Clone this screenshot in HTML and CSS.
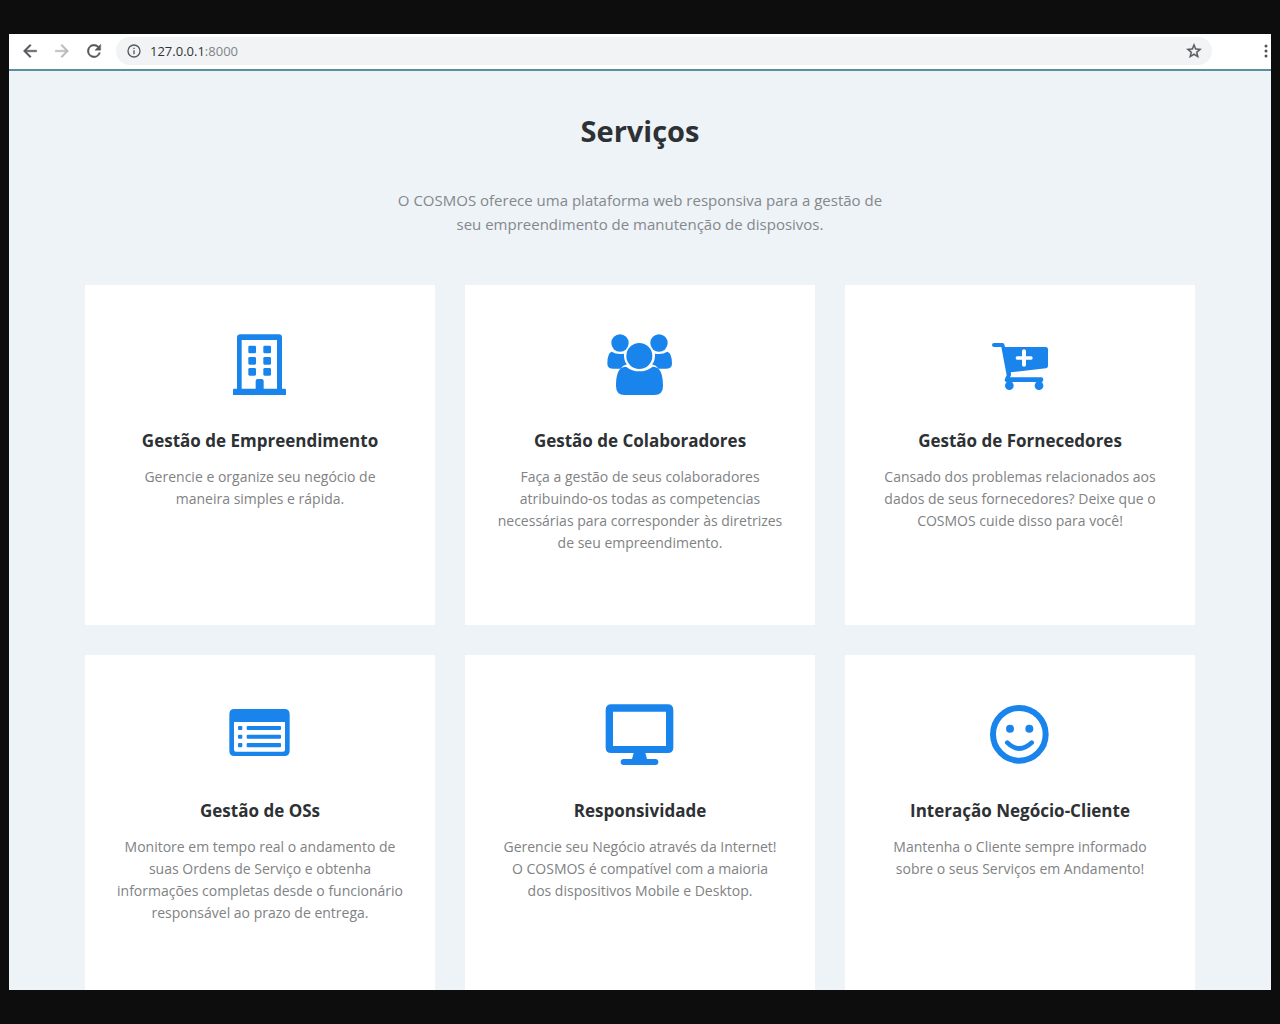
FILE: index.html
```html
<!DOCTYPE html>
<html lang="pt-BR">
<head>
<meta charset="utf-8">
<meta name="viewport" content="width=device-width, initial-scale=1">
<title>COSMOS</title>
<link rel="stylesheet" href="styles.css">
</head>
<body>
<div class="window">
  <header class="toolbar">
    <button class="tool" type="button" aria-label="Voltar"><svg viewBox="0 0 24 24"><path d="M20 11H7.800l5.600-5.600L12 4l-8 8 8 8 1.400-1.400L7.800 13H20z"/></svg></button>
    <button class="tool tool-off" type="button" aria-label="Avançar" disabled><svg viewBox="0 0 24 24"><path d="M12 4l-1.400 1.400 5.600 5.600H4v2h12.200l-5.600 5.600L12 20l8-8z"/></svg></button>
    <button class="tool" type="button" aria-label="Recarregar"><svg viewBox="0 0 24 24"><path d="M17.650 6.350A8 8 0 1 0 19.730 14h-2.080A6 6 0 1 1 12 6c1.660 0 3.140.690 4.220 1.780L13 11h7V4z"/></svg></button>
    <form class="address">
      <svg class="info" viewBox="0 0 24 24"><path d="M11 7h2v2h-2zm0 4h2v6h-2zm1-9a10 10 0 1 0 0 20 10 10 0 0 0 0-20zm0 18a8 8 0 1 1 0-16 8 8 0 0 1 0 16z"/></svg>
      <a class="url" href="#servicos">127.0.0.1<span class="port">:8000</span></a>
      <button class="star" type="button" aria-label="Adicionar aos favoritos"><svg viewBox="0 0 24 24"><path d="M22 9.240l-7.190-.620L12 2 9.190 8.630 2 9.240l5.460 4.730L5.820 21 12 17.270 18.180 21l-1.630-7.030zM12 15.400l-3.760 2.270 1-4.280-3.320-2.880 4.380-.380L12 6.100l1.710 4.040 4.380.380-3.320 2.880 1 4.280z"/></svg></button>
    </form>
    <button class="menu" type="button" aria-label="Menu"><svg viewBox="0 0 6 16"><circle cx="3" cy="3" r="1.500"/><circle cx="3" cy="8" r="1.500"/><circle cx="3" cy="13" r="1.500"/></svg></button>
  </header>

  <main class="services" id="servicos">
    <h1>Serviços</h1>
    <p class="intro">O COSMOS oferece uma plataforma web responsiva para a gestão de<br>seu empreendimento de manutenção de disposivos.</p>

    <div class="cards">
      <article class="card">
        <svg class="icon" viewBox="0 0 240 240"><path fill-rule="evenodd" d="M62 28H176q10 0 10 10V191h8q4 0 4 4v15H39v-15q0-4 4-4h8V38q0-10 11-10zM65 45V191H107V168q0-6 6-6h12q6 0 6 6v23H171V45z"/><rect x="85" y="62" width="23" height="23" rx="4"/><rect x="130" y="62" width="23" height="23" rx="4"/><rect x="85" y="96" width="23" height="23" rx="4"/><rect x="130" y="96" width="23" height="23" rx="4"/><rect x="85" y="129" width="23" height="23" rx="4"/><rect x="130" y="129" width="23" height="23" rx="4"/></svg>
        <h2>Gestão de Empreendimento</h2>
        <p>Gerencie e organize seu negócio de<br>maneira simples e rápida.</p>
      </article>
      <article class="card">
        <svg class="icon" viewBox="0 0 240 240"><circle cx="60" cy="54" r="26"/><circle cx="177" cy="54" r="26"/><circle cx="118" cy="93" r="39"/><path d="M35 80q14 9 37 6-1 22 9 32-12 3-20 13H40Q22 131 22 116 22 84 35 80zM202 80q-14 9-37 6 1 22-9 32 12 3 20 13h21q19 0 19-15 0-32-14-36zM78 125q18 14 40 14t40-14c24-1 31 25 31 58q0 27-26 27H74q-26 0-26-27c0-33 7-59 30-58z"/></svg>
        <h2>Gestão de Colaboradores</h2>
        <p>Faça a gestão de seus colaboradores<br>atribuindo-os todas as competencias<br>necessárias para corresponder às diretrizes<br>de seu empreendimento.</p>
      </article>
      <article class="card">
        <svg class="icon" viewBox="0 0 240 240"><path fill-rule="evenodd" d="M42 54H68q5 0 7 12H197q7 0 7 7v50q0 6-6 7L92 142q3 7-2 15h94q6 0 6 7t-6 7H80q-6 0-6-6 0-3 6-14L64 66H42q-6 0-6-6t6-6zM126 78V94H111q-4 0-4 5t4 5h15v16q0 5 6 5t6-5v-16h16q4 0 4-5t-4-5H138V78q0-5-6-5t-6 5z"/><circle cx="88" cy="182" r="13"/><circle cx="177" cy="182" r="13"/></svg>
        <h2>Gestão de Fornecedores</h2>
        <p>Cansado dos problemas relacionados aos<br>dados de seus fornecedores? Deixe que o<br>COSMOS cuide disso para você!</p>
      </article>
      <article class="card">
        <svg class="icon" viewBox="0 0 240 240"><path fill-rule="evenodd" d="M43 42H193q16 0 16 16V167q0 16-16 16H43q-15 0-15-16V58q0-16 15-16zM42 81V164q0 6 6 6H189q6 0 6-6V81z"/><rect x="54" y="93" width="13" height="12" rx="3"/><rect x="54" y="119" width="13" height="12" rx="3"/><rect x="54" y="144" width="13" height="13" rx="3"/><rect x="80" y="93" width="103" height="12" rx="3"/><rect x="80" y="119" width="103" height="12" rx="3"/><rect x="80" y="144" width="103" height="13" rx="3"/></svg>
        <h2>Gestão de OSs</h2>
        <p>Monitore em tempo real o andamento de<br>suas Ordens de Serviço e obtenha<br>informações completas desde o funcionário<br>responsável ao prazo de entrega.</p>
      </article>
      <article class="card">
        <svg class="icon" viewBox="0 0 240 240"><path fill-rule="evenodd" d="M34 28H203q17 0 17 17V158q0 16-17 16H136l5 18h25q9 0 9 9t-9 9H71q-9 0-9-9t9-9H96l5-18H34q-17 0-17-16V45q0-17 17-17zM39 50V153H198V50z"/></svg>
        <h2>Responsividade</h2>
        <p>Gerencie seu Negócio através da Internet!<br>O COSMOS é compatível com a maioria<br>dos dispositivos Mobile e Desktop.</p>
      </article>
      <article class="card">
        <svg class="icon" viewBox="0 0 240 240"><circle class="stroke" cx="118" cy="118" r="79"/><circle cx="90" cy="101" r="12"/><circle cx="148" cy="101" r="12"/><path class="stroke smile" d="M82 143q36 35 73 0"/></svg>
        <h2>Interação Negócio-Cliente</h2>
        <p>Mantenha o Cliente sempre informado<br>sobre o seus Serviços em Andamento!</p>
      </article>
    </div>
  </main>
</div>
</body>
</html>
```
FILE: styles.css
```css
* { box-sizing: border-box; }

body {
  margin: 0;
  height: 100vh;
  padding: 34px 9px;
  background: #0d0d0d;
  font-family: "Open Sans", "Noto Sans", sans-serif;
  color: #2d3134;
}

.window {
  height: 100%;
  display: flex;
  flex-direction: column;
  overflow: hidden;
  background: #eef3f8;
}

.toolbar {
  flex: none;
  display: flex;
  align-items: center;
  height: 37px;
  padding: 0 1px 1px 11px;
  background: #fff;
  border-bottom: 2px solid #5a8f9c;
}

button {
  display: flex;
  justify-content: center;
  align-items: center;
  border: 0;
  padding: 0;
  background: none;
}

.tool { width: 20px; height: 20px; margin-right: 12px; }
.tool svg { width: 20px; height: 20px; fill: #55595d; stroke: #55595d; stroke-width: 0.5; }
.tool-off svg { fill: #b9bbbd; stroke: #b9bbbd; }

.address {
  flex: 1;
  display: flex;
  align-items: center;
  height: 28px;
  padding: 0 9px 0 10px;
  border-radius: 14px;
  background: #f1f3f4;
}

.info { width: 16px; height: 16px; margin-right: 8px; fill: #55595d; }
.url { flex: 1; font-size: 13px; line-height: 20px; color: #303337; text-decoration: none; }
.port { color: #808488; }
.star svg { width: 18px; height: 18px; fill: #55595d; stroke: #55595d; stroke-width: 0.5; }
.menu { width: 8px; height: 16px; margin-left: 50px; }
.menu svg { width: 6px; height: 16px; fill: #505458; }

.services {
  flex: 1;
  min-height: 0;
  padding: 42px 24px 0;
  text-align: center;
}

h1 { margin: 0 0 39px; font-size: 29px; line-height: 36px; }
.intro { margin: 0 0 49px; font-size: 15px; line-height: 24px; color: #84888b; }

.cards {
  display: grid;
  grid-template-columns: repeat(3, 1fr);
  grid-auto-rows: 340px;
  gap: 30px;
  max-width: 1110px;
  margin: 0 auto;
}

.card { padding: 40px 20px; background: #fff; }
.icon { display: block; width: 80px; height: 80px; margin: 0 auto 24px; fill: #1984ec; }
.stroke { fill: none; stroke: #1984ec; stroke-width: 18; }
.smile { stroke-width: 14; stroke-linecap: round; }
h2 { margin: 0 0 13px; font-size: 17px; line-height: 24px; white-space: nowrap; }
.card p { margin: 0; font-size: 14px; line-height: 22px; color: #808284; white-space: nowrap; }
```
